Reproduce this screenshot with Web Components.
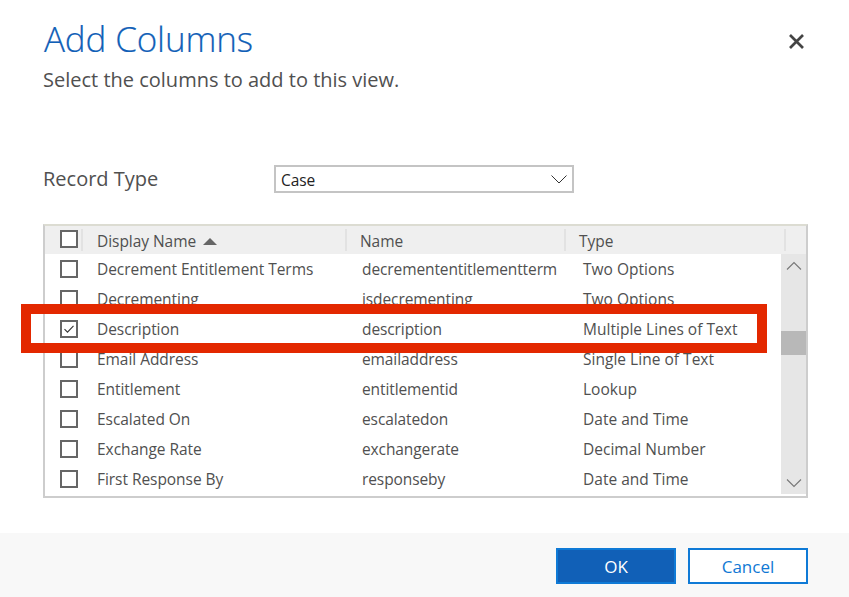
<!DOCTYPE html>
<html><head><meta charset="utf-8"><style>
html,body{margin:0;padding:0;background:#fff}
body{font-family:"Open Sans","Noto Sans",sans-serif}
</style></head><body>
<add-columns-dialog>
  <dialog-title slot="head" heading="Add Columns" sub="Select the columns to add to this view."></dialog-title>
  <record-select slot="record" label="Record Type" value="Case"></record-select>
  <columns-grid slot="grid">
    <col-row name="Decrement Entitlement Terms" logical="decremententitlementterm" type="Two Options"></col-row>
    <col-row name="Decrementing" logical="isdecrementing" type="Two Options"></col-row>
    <col-row name="Description" logical="description" type="Multiple Lines of Text" checked></col-row>
    <col-row name="Email Address" logical="emailaddress" type="Single Line of Text"></col-row>
    <col-row name="Entitlement" logical="entitlementid" type="Lookup"></col-row>
    <col-row name="Escalated On" logical="escalatedon" type="Date and Time"></col-row>
    <col-row name="Exchange Rate" logical="exchangerate" type="Decimal Number"></col-row>
    <col-row name="First Response By" logical="responseby" type="Date and Time"></col-row>
  </columns-grid>
  <dialog-footer slot="foot"></dialog-footer>
</add-columns-dialog>
<script>
const FONT='"Open Sans","Noto Sans",sans-serif';
function def(name,html){
  customElements.define(name,class extends HTMLElement{
    connectedCallback(){
      if(this.shadowRoot)return;
      const r=this.attachShadow({mode:'open'});
      r.innerHTML=typeof html==='function'?html(this):html;
    }
  });
}
const check=(on)=>`<svg width="18" height="18" viewBox="0 0 18 18" style="display:block"><rect x="1" y="1" width="16" height="16" fill="#fff" stroke="#666" stroke-width="2"/>${on?'<path d="M4.5 9.2l3 3 6-6.4" fill="none" stroke="#333" stroke-width="1.1"/>':''}</svg>`;

def('add-columns-dialog',`<style>
:host{display:flex;flex-direction:column;width:849px;height:597px;position:relative;overflow:hidden;background:#fff;color:#505050;font-family:${FONT}}
.main{flex:1;display:flex;flex-direction:column;padding:0 41px 0 43px;min-height:0}
.x{position:absolute;left:789px;top:34px;width:15px;height:15px}
</style>
<div class="main"><slot name="head"></slot><slot name="record"></slot><slot name="grid"></slot></div>
<slot name="foot"></slot>
<svg class="x" viewBox="0 0 15 15"><path d="M1 1l13 13M14 1L1 14" stroke="#444" stroke-width="2.7" fill="none"/></svg>`);

def('dialog-title',h=>`<style>
:host{display:block;padding-top:15px}
h1{margin:0;font-weight:300;font-size:35px;line-height:48px;color:#1160b7;letter-spacing:-.15px;padding-left:1px;-webkit-text-stroke:.2px #1160b7}
p{margin:0;font-size:20px;line-height:26px;color:#505050;padding-top:4px}
</style><h1>${h.getAttribute('heading')}</h1><p>${h.getAttribute('sub')}</p>`);

def('record-select',h=>`<style>
:host{display:flex;align-items:center;margin-top:72px;height:28px}
.l{width:231px;font-size:20px;line-height:28px;color:#505050;height:28px}
.s{box-sizing:border-box;width:300px;height:28px;border:2px solid #c4c4c4;display:flex;align-items:center;justify-content:space-between;padding:1px 5px 0;font-size:15.5px;color:#222;letter-spacing:-.1px}
svg{margin-top:-1px}
</style><div class="l">${h.getAttribute('label')}</div>
<div class="s"><span>${h.getAttribute('value')}</span><svg width="16" height="9" viewBox="0 0 16 9"><path d="M.5.5L8 8l7.5-7.5" fill="none" stroke="#333" stroke-width="1"/></svg></div>`);

def('columns-grid',`<style>
:host{display:block;box-sizing:border-box;margin-top:31px;width:765px;height:274px;border:2px solid #cdcdcd;border-top-color:#dcdcd2;position:relative;font-size:15.5px;color:#505050}
.head{height:28px;background:#efefef;display:grid;grid-template-columns:38px 264px 219px 220px 1fr;align-items:center;letter-spacing:-.05px}
.head>div{height:22px;line-height:24px;border-right:2px solid #e2e2e2;box-sizing:border-box;white-space:nowrap}
.head>div:last-child{border:0}
.c{padding-left:15px}
.c svg{display:block;margin-top:1px}
.n{padding-left:14px}
.t{padding-left:13px}
.tri{display:inline-block;margin-left:7px;vertical-align:2px;border:7.5px solid transparent;border-top:0;border-bottom:7px solid #666}
.body{display:flex;height:240px}
.rows{flex:1;min-width:0}
.sb{width:25px;margin-left:9px;background:#e6e6e6;display:flex;flex-direction:column;justify-content:space-between;position:relative}
.sb svg{display:block;margin:0 auto}
.up{margin-top:7px!important}.dn{margin-bottom:6px!important}
.thumb{position:absolute;left:0;right:0;top:77px;height:24px;background:#b8b8b8}
.red{position:absolute;left:-24px;top:78px;width:746px;height:49px;box-sizing:border-box;border:10px solid #e32800;pointer-events:none}
</style>
<div class="head">
  <div class="c">${check(false)}</div>
  <div class="n">Display Name<span class="tri"></span></div>
  <div class="n" style="padding-left:13px">Name</div>
  <div class="t">Type</div>
  <div></div>
</div>
<div class="body"><div class="rows"><slot></slot></div>
<div class="sb">
  <svg class="up" width="16" height="9" viewBox="0 0 16 9"><path d="M1 8.5l7-7 7 7" fill="none" stroke="#777" stroke-width="1.1"/></svg>
  <div class="thumb"></div>
  <svg class="dn" width="16" height="9" viewBox="0 0 16 9"><path d="M1 .5l7 7 7-7" fill="none" stroke="#777" stroke-width="1.1"/></svg>
</div></div>
<div class="red"></div>`);

def('col-row',h=>`<style>
:host{display:grid;grid-template-columns:38px 279px 221px 1fr;height:30px;align-items:center;white-space:nowrap}
.c{padding-left:15px}
.c svg{display:block}
.n{padding-left:14px;letter-spacing:-.05px}
.l{letter-spacing:-.1px}
.t{letter-spacing:.02px}
</style><div class="c">${check(h.hasAttribute('checked'))}</div><div class="n">${h.getAttribute('name')}</div><div class="l">${h.getAttribute('logical')}</div><div class="t">${h.getAttribute('type')}</div>`);

def('dialog-footer',`<style>
:host{display:flex;justify-content:flex-end;gap:12px;height:64px;box-sizing:border-box;padding:15px 41px 13px 0;background:#f8f8f8}
.b{box-sizing:border-box;width:120px;height:36px;border:2px solid #0f7ad6;font-size:17px;display:flex;align-items:center;justify-content:center}
.ok{background:#1160b7;color:#fff}
.cancel{background:#fff;color:#1078d4}
</style><div class="b ok">OK</div><div class="b cancel">Cancel</div>`);
</script>
</body></html>
